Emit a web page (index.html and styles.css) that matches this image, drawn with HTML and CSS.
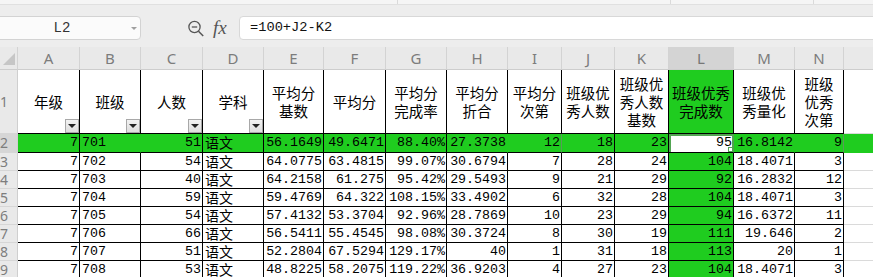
FILE: index.html
```html
<!DOCTYPE html>
<html lang="zh-CN">
<head>
<meta charset="utf-8">
<title>Sheet</title>
<link rel="stylesheet" href="styles.css">
</head>
<body>
<div class="strip"><span class="sep s1"></span><span class="sep s2"></span><span class="sep s3"></span></div>
<div class="fbar">
  <div class="namebox">L2<span class="dd"></span></div>
  <svg class="zoomic" width="16" height="17" viewBox="0 0 16 17"><circle cx="6.5" cy="7" r="5.6" fill="none" stroke="#555" stroke-width="1.3"/><line x1="3.8" y1="7" x2="9.2" y2="7" stroke="#555" stroke-width="1.3"/><line x1="10.5" y1="11.2" x2="15.2" y2="16" stroke="#555" stroke-width="1.5"/></svg>
  <span class="fx">fx</span>
  <div class="formula">=100+J2-K2</div>
</div>
<div class="sheet">
  <div class="row colhdr">
    <div class="corner"><svg width="18" height="22" viewBox="0 0 18 22"><polygon points="15,6 15,18 3,18" fill="#c6c6c6"/></svg></div>
    <div class="lt ca">A</div><div class="lt cb">B</div><div class="lt cc">C</div><div class="lt cd">D</div><div class="lt ce">E</div><div class="lt cf">F</div><div class="lt cg">G</div><div class="lt ch">H</div><div class="lt ci">I</div><div class="lt cj">J</div><div class="lt ck">K</div><div class="lt cl on">L</div><div class="lt cm">M</div><div class="lt cn">N</div><div class="lt co"></div>
  </div>
  <div class="row r1">
    <div class="rh"><span>1</span></div>
    <div class="cell hc ca">年级<span class="flt"></span></div>
    <div class="cell hc cb">班级<span class="flt"></span></div>
    <div class="cell hc cc">人数<span class="flt"></span></div>
    <div class="cell hc cd">学科<span class="flt"></span></div>
    <div class="cell hc ce">平均分<br>基数</div>
    <div class="cell hc cf">平均分</div>
    <div class="cell hc cg">平均分<br>完成率</div>
    <div class="cell hc ch">平均分<br>折合</div>
    <div class="cell hc ci">平均分<br>次第</div>
    <div class="cell hc cj">班级优<br>秀人数</div>
    <div class="cell hc ck">班级优<br>秀人数<br>基数</div>
    <div class="cell hc cl g">班级优秀<br>完成数</div>
    <div class="cell hc cm">班级优<br>秀量化</div>
    <div class="cell hc cn">班级<br>优秀<br>次第</div>
    <div class="cell co"></div>
  </div>
  <div class="row dr r2">
    <div class="rh on"><span>2</span></div>
    <div class="cell ca g">7</div><div class="cell cb g t nb">701</div><div class="cell cc g">51</div><div class="cell cd g t"><span class="cj-t">语文</span></div><div class="cell ce g">56.1649</div><div class="cell cf g">49.6471</div><div class="cell cg g">88.40%</div><div class="cell ch g nb">27.3738</div><div class="cell ci g fb">12</div><div class="cell cj g">18</div><div class="cell ck g">23</div><div class="cell cl sel">95<span class="handle"></span></div><div class="cell cm g nb">16.8142</div><div class="cell cn g fb">9</div><div class="cell co g"></div>
  </div>
  <div class="row dr">
    <div class="rh"><span>3</span></div>
    <div class="cell ca">7</div><div class="cell cb t">702</div><div class="cell cc">54</div><div class="cell cd t"><span class="cj-t">语文</span></div><div class="cell ce">64.0775</div><div class="cell cf">63.4815</div><div class="cell cg">99.07%</div><div class="cell ch">30.6794</div><div class="cell ci">7</div><div class="cell cj">28</div><div class="cell ck">24</div><div class="cell cl g">104</div><div class="cell cm">18.4071</div><div class="cell cn">3</div><div class="cell co"></div>
  </div>
  <div class="row dr">
    <div class="rh"><span>4</span></div>
    <div class="cell ca">7</div><div class="cell cb t">703</div><div class="cell cc">40</div><div class="cell cd t"><span class="cj-t">语文</span></div><div class="cell ce">64.2158</div><div class="cell cf">61.275</div><div class="cell cg">95.42%</div><div class="cell ch">29.5493</div><div class="cell ci">9</div><div class="cell cj">21</div><div class="cell ck">29</div><div class="cell cl g">92</div><div class="cell cm">16.2832</div><div class="cell cn">12</div><div class="cell co"></div>
  </div>
  <div class="row dr">
    <div class="rh"><span>5</span></div>
    <div class="cell ca">7</div><div class="cell cb t">704</div><div class="cell cc">59</div><div class="cell cd t"><span class="cj-t">语文</span></div><div class="cell ce">59.4769</div><div class="cell cf">64.322</div><div class="cell cg">108.15%</div><div class="cell ch">33.4902</div><div class="cell ci">6</div><div class="cell cj">32</div><div class="cell ck">28</div><div class="cell cl g">104</div><div class="cell cm">18.4071</div><div class="cell cn">3</div><div class="cell co"></div>
  </div>
  <div class="row dr">
    <div class="rh"><span>6</span></div>
    <div class="cell ca">7</div><div class="cell cb t">705</div><div class="cell cc">54</div><div class="cell cd t"><span class="cj-t">语文</span></div><div class="cell ce">57.4132</div><div class="cell cf">53.3704</div><div class="cell cg">92.96%</div><div class="cell ch">28.7869</div><div class="cell ci">10</div><div class="cell cj">23</div><div class="cell ck">29</div><div class="cell cl g">94</div><div class="cell cm">16.6372</div><div class="cell cn">11</div><div class="cell co"></div>
  </div>
  <div class="row dr">
    <div class="rh"><span>7</span></div>
    <div class="cell ca">7</div><div class="cell cb t">706</div><div class="cell cc">66</div><div class="cell cd t"><span class="cj-t">语文</span></div><div class="cell ce">56.5411</div><div class="cell cf">55.4545</div><div class="cell cg">98.08%</div><div class="cell ch">30.3724</div><div class="cell ci">8</div><div class="cell cj">30</div><div class="cell ck">19</div><div class="cell cl g">111</div><div class="cell cm">19.646</div><div class="cell cn">2</div><div class="cell co"></div>
  </div>
  <div class="row dr">
    <div class="rh"><span>8</span></div>
    <div class="cell ca">7</div><div class="cell cb t">707</div><div class="cell cc">51</div><div class="cell cd t"><span class="cj-t">语文</span></div><div class="cell ce">52.2804</div><div class="cell cf">67.5294</div><div class="cell cg">129.17%</div><div class="cell ch">40</div><div class="cell ci">1</div><div class="cell cj">31</div><div class="cell ck">18</div><div class="cell cl g">113</div><div class="cell cm">20</div><div class="cell cn">1</div><div class="cell co"></div>
  </div>
  <div class="row dr">
    <div class="rh"><span>9</span></div>
    <div class="cell ca">7</div><div class="cell cb t">708</div><div class="cell cc">53</div><div class="cell cd t"><span class="cj-t">语文</span></div><div class="cell ce">48.8225</div><div class="cell cf">58.2075</div><div class="cell cg">119.22%</div><div class="cell ch">36.9203</div><div class="cell ci">4</div><div class="cell cj">27</div><div class="cell ck">23</div><div class="cell cl g">104</div><div class="cell cm">18.4071</div><div class="cell cn">3</div><div class="cell co"></div>
  </div>
</div>
</body>
</html>
```

FILE: styles.css
```css
* { box-sizing: border-box; }
html, body { margin: 0; padding: 0; }
body {
  width: 873px;
  height: 277px;
  overflow: hidden;
  background: #ffffff;
  font-family: "Liberation Mono", "Noto Sans CJK SC", monospace;
  color: #000;
}

/* top strip */
.strip {
  height: 5px;
  background: #f5f5f5;
  border-bottom: 1px solid #e0e0e0;
  display: flex;
}
.strip .sep { width: 1px; background: #dadada; }
.strip .s1 { margin-left: 397px; }
.strip .s2 { margin-left: 272px; }
.strip .s3 { margin-left: 142px; }

/* formula bar */
.fbar {
  height: 42px;
  background: #ededed;
  display: flex;
  align-items: flex-start;
  padding-top: 11px;
}
.namebox {
  flex: none;
  width: 146px;
  height: 24px;
  margin-left: -5px;
  background: #fbfbfb;
  border: 1px solid #d3d3d3;
  border-radius: 4px;
  position: relative;
  text-align: center;
  padding-right: 12px;
  font: 14px/22px "Liberation Mono", monospace;
  color: #333;
}
.namebox .dd {
  position: absolute;
  right: 3px;
  top: 10px;
  width: 0;
  height: 0;
  border-left: 3px solid transparent;
  border-right: 3px solid transparent;
  border-top: 3px solid #a0a0a0;
}
.zoomic {
  flex: none;
  margin-left: 47px;
  margin-top: 4px;
}
.fx {
  flex: none;
  width: 17px;
  margin-left: 9px;
  font: italic 19px/24px "Liberation Serif", serif;
  color: #555;
}
.formula {
  flex: 1;
  height: 24px;
  margin-left: 9px;
  margin-right: -6px;
  background: #ffffff;
  border: 1px solid #d8d8d8;
  border-radius: 4px;
  padding-left: 10px;
  font: 13.7px/22px "Liberation Mono", monospace;
  color: #111;
}

/* sheet */
.row { display: flex; }

.ca { width: 62px; }
.cb { width: 61px; }
.cc { width: 62px; }
.cd { width: 61px; }
.ce { width: 60px; }
.cf { width: 62px; }
.cg { width: 61px; }
.ch { width: 61px; }
.ci { width: 54px; }
.cj { width: 53px; }
.ck { width: 54px; }
.cl { width: 65px; }
.cm { width: 61px; }
.cn { width: 49px; }
.co { flex: 1 1 auto; min-width: 0; }

.colhdr { height: 23px; background: #e9e9e9; }
.corner {
  width: 18px;
  flex: none;
  border-right: 1px solid #d3d3d3;
  border-bottom: 1px solid #cdcdcd;
}
.corner svg { display: block; }
.lt {
  flex: none;
  border-right: 1px solid #d3d3d3;
  border-bottom: 1px solid #cdcdcd;
  text-align: center;
  font: 15px/22px "Noto Sans", "Liberation Sans", sans-serif;
  color: #7c7c7c;
}
.lt.co { flex: 1 1 auto; border-right: none; }
.lt.on { background: #d4d4d4; color: #777; }

.rh {
  width: 18px;
  flex: none;
  overflow: hidden;
  background: #e9e9e9;
  border-right: 1px solid #cfcfcf;
  border-bottom: 1px solid #d6d6d6;
  color: #7d7d7d;
  font: 14px/17px "Noto Sans", "Liberation Sans", sans-serif;
}
.rh span {
  display: block;
  width: 26px;
  margin-left: -9px;
  text-align: center;
}
.rh.on { background: #d6d6d6; }

.cell {
  flex: none;
  border-right: 1px solid #000;
  border-bottom: 1px solid #000;
  overflow: hidden;
  white-space: nowrap;
}
.cell.co { flex: 1 1 auto; border-right: none; border-bottom: 1px solid #dadada; }

/* header row 1 */
.r1 { height: 64px; }
.r1 .rh { display: flex; align-items: center; }
.hc {
  position: relative;
  display: flex;
  align-items: center;
  justify-content: center;
  text-align: center;
  white-space: normal;
  font: 14.5px/18px "Noto Sans CJK SC", sans-serif;
  padding-top: 1px;
}
.flt {
  position: absolute;
  right: 0;
  bottom: 0;
  width: 14px;
  height: 14px;
  background: linear-gradient(#f2f2f2, #dedede);
  border: 1px solid #a8a8a8;
}
.flt::after {
  content: "";
  position: absolute;
  left: 2px;
  top: 4px;
  width: 0;
  height: 0;
  border-left: 4px solid transparent;
  border-right: 4px solid transparent;
  border-top: 4px solid #222;
}

/* data rows */
.dr { height: 18px; }
.dr.r2 { height: 19px; }
.dr .cell {
  font-size: 13.3px;
  line-height: 17px;
  text-align: right;
  padding-right: 1px;
}
.dr.r2 .cell { line-height: 18px; }
.dr .cell.t { text-align: left; padding-left: 2px; overflow: visible; }
.cj-t {
  display: inline-block;
  vertical-align: top;
  font: 14px/17px "Noto Sans CJK SC", sans-serif;
}

.g { background: #1fcc1f; }
.r2 .g.nb { border-right-color: #1fcc1f; }
.r2 .g.fb { border-right-color: #5a9a5a; }
.r2 .cell.co { border-bottom-color: #1fcc1f; }

.sel {
  position: relative;
  background: #ffffff;
  border-right-color: #4f9f4f;
  box-shadow: inset 2px 2px 0 #52a552, inset -1px 0 0 #52a552;
  padding-right: 2px;
}
.handle {
  position: absolute;
  right: 0;
  bottom: 0;
  width: 5px;
  height: 5px;
  background: #ffffff;
  border: 1px solid #52a552;
}
```
